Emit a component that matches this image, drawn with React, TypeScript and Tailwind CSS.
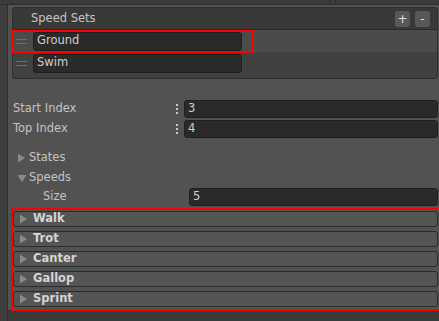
import React from "react";

const font = { fontFamily: '"DejaVu Sans", "Liberation Sans", sans-serif' };

function TriRight({ className = "" }: { className?: string }) {
  return (
    <svg width="9" height="10" viewBox="0 0 9 10" className={className}>
      <path d="M1 0.5 L8 5 L1 9.5 Z" fill="#8a8a8a" />
    </svg>
  );
}
function TriDown() {
  return (
    <svg width="10" height="9" viewBox="0 0 10 9">
      <path d="M0.5 1 L9.5 1 L5 8 Z" fill="#8a8a8a" />
    </svg>
  );
}

function Handle() {
  return (
    <div className="w-[11px] flex flex-col gap-[3px] ml-[3px] mr-[6px]">
      <div className="h-[1px] bg-[#6e6e6e]" />
      <div className="h-[1px] bg-[#6e6e6e]" />
    </div>
  );
}

function Field({ value, className = "" }: { value: string; className?: string }) {
  return (
    <div
      className={`h-[18px] rounded-[3px] bg-[#2a2a2a] border border-[#202020] flex items-center pl-[3px] text-[11.5px] text-[#cfcfcf] ${className}`}
    >
      {value}
    </div>
  );
}

function Dots() {
  return (
    <div className="w-[9px] mr-[3px] flex flex-col items-center gap-[2px]">
      <div className="w-[2px] h-[2px] bg-[#c8c8c8]" />
      <div className="w-[2px] h-[2px] bg-[#c8c8c8]" />
      <div className="w-[2px] h-[2px] bg-[#c8c8c8]" />
    </div>
  );
}

function Fold({ label }: { label: string }) {
  return (
    <div className="h-[16px] rounded-[3px] border border-[#2b2b2b] bg-[#555555] flex items-center pl-[5px]">
      <TriRight />
      <span className="ml-[5px] text-[11.5px] font-bold text-[#d4d4d4]">{label}</span>
    </div>
  );
}

export default function App() {
  return (
    <div className="w-[439px] h-[321px] bg-[#383838] relative overflow-hidden flex flex-col" style={font}>
      {/* top strip */}
      <div className="h-[5px] bg-[#3b3b3b] border-b border-[#2c2c2c] flex">
        <div className="w-[12px] border-r border-[#2c2c2c]" />
        <div className="w-[318px] border-r border-[#2c2c2c]" />
        <div className="w-[6px] border-r border-[#2c2c2c]" />
      </div>
      <div className="flex flex-1">
        <div className="w-[8px] bg-[#3e3e3e] border-r border-[#2b2b2b]" />
        <div className="flex-1 flex flex-col">
          <div className="h-[305px] bg-[#525252] flex flex-col pt-[2px] pl-[4px] pr-[1px]">
            {/* Speed Sets box */}
            <div className="h-[72px] rounded-[3px] border border-[#2e2e2e] bg-[#414141] flex flex-col overflow-hidden">
              <div className="h-[22px] bg-[#393939] border-b border-[#2a2a2a] flex items-center pl-[18px] pr-[7px]">
                <span className="text-[11.5px] text-[#c4c4c4] flex-1">Speed Sets</span>
                <div className="w-[15px] h-[16px] rounded-[3px] bg-[#585858] flex items-center justify-center text-[12px] text-[#e0e0e0] mr-[5px]">+</div>
                <div className="w-[15px] h-[16px] rounded-[3px] bg-[#585858] flex items-center justify-center text-[12px] text-[#e0e0e0]">-</div>
              </div>
              <div className="h-[22px] bg-[#4b4b4b] flex items-center">
                <Handle />
                <Field value="Ground" className="w-[209px] h-[19px]" />
              </div>
              <div className="h-[22px] flex items-center">
                <Handle />
                <Field value="Swim" className="w-[209px] h-[19px]" />
              </div>
            </div>
            {/* indexes */}
            <div className="mt-[21px] flex flex-col gap-[2px] pl-[1px]">
              <div className="h-[18px] flex items-center">
                <span className="w-[159px] text-[11.5px] text-[#c4c4c4]">Start Index</span>
                <Dots />
                <Field value="3" className="flex-1" />
              </div>
              <div className="h-[18px] flex items-center">
                <span className="w-[159px] text-[11.5px] text-[#c4c4c4]">Top Index</span>
                <Dots />
                <Field value="4" className="flex-1" />
              </div>
            </div>
            <div className="mt-[12px] h-[16px] flex items-center pl-[5px]">
              <TriRight />
              <span className="ml-[3px] text-[11.5px] text-[#c4c4c4]">States</span>
            </div>
            <div className="mt-[4px] h-[16px] flex items-center pl-[5px]">
              <TriDown />
              <span className="ml-[2px] text-[11.5px] text-[#c4c4c4]">Speeds</span>
            </div>
            <div className="mt-[2px] h-[18px] flex items-center">
              <span className="w-[177px] pl-[31px] text-[11.5px] text-[#c4c4c4]">Size</span>
              <Field value="5" className="flex-1" />
            </div>
            <div className="mt-[5px] flex flex-col gap-[4px] pl-[1px]">
              <Fold label="Walk" />
              <Fold label="Trot" />
              <Fold label="Canter" />
              <Fold label="Gallop" />
              <Fold label="Sprint" />
            </div>
          </div>
          <div className="flex-1 bg-[#3a3a3a] border-t border-[#2a2a2a]" />
        </div>
      </div>
      {/* red annotation overlays */}
      <div className="absolute left-[11px] top-[30px] w-[243px] h-[23px] border-2 border-[#ff0000] pointer-events-none" />
      <div className="absolute left-[11px] top-[208px] w-[432px] h-[103px] border-2 border-[#ff0000] pointer-events-none" />
    </div>
  );
}
